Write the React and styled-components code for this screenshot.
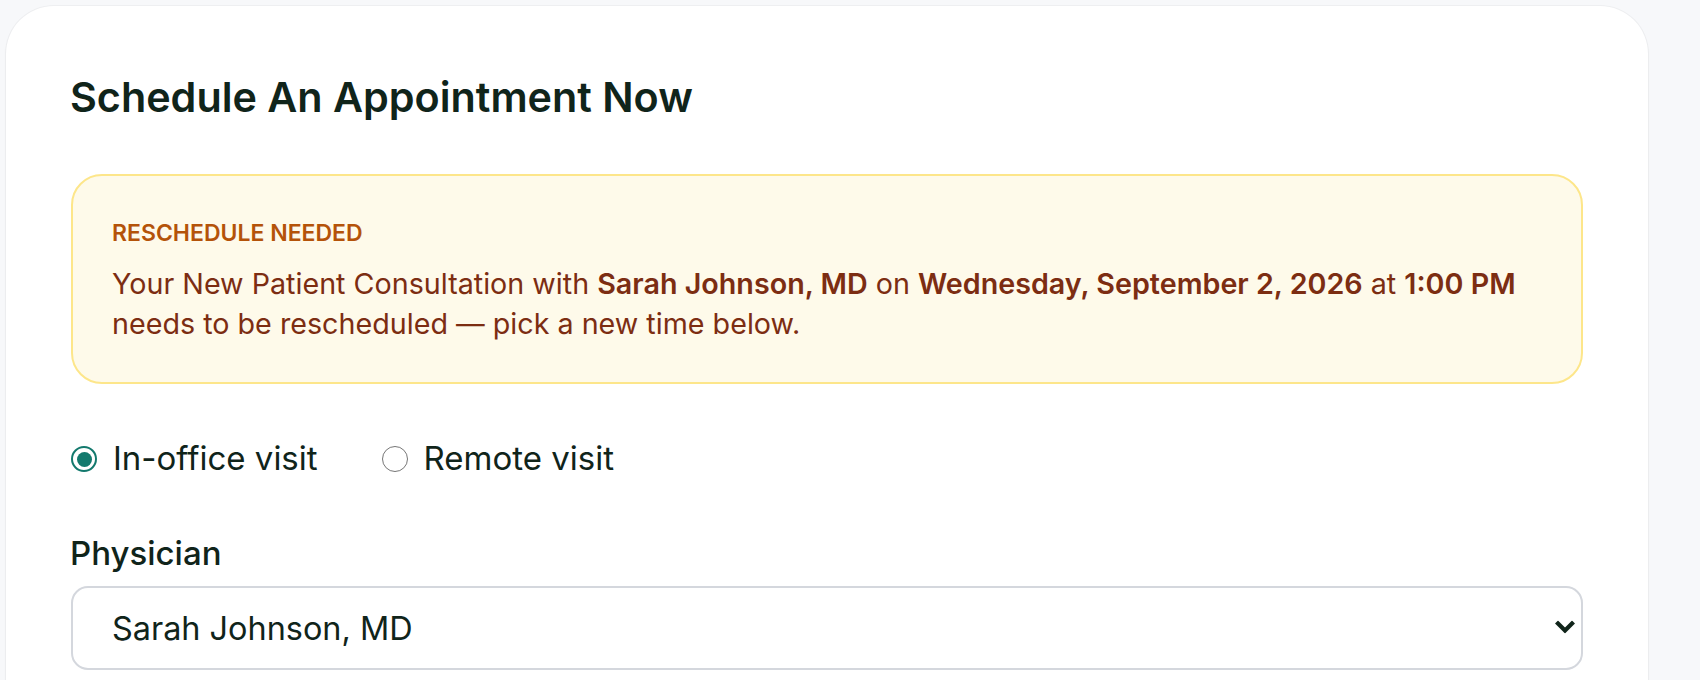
import React, { useState } from "react";
import styled, { createGlobalStyle } from "styled-components";

const GlobalStyle = createGlobalStyle`
  html, body { margin: 0; padding: 0; background: #f7f8fa; }
  body { font-family: "Inter", "Noto Sans", sans-serif; color: #12261c; }
  * { box-sizing: border-box; }
`;

const Page = styled.div`
  padding: 6px 52px 0 6px;
  min-height: 680px;
`;

const Card = styled.section`
  background: #ffffff;
  border-radius: 48px;
  box-shadow: 0 0 0 1px rgba(15, 23, 42, 0.035), 0 1px 3px rgba(15, 23, 42, 0.04);
  padding: 66px 65px 65px 65px;
  display: flex;
  flex-direction: column;
`;

const Title = styled.h1`
  margin: 0 0 0 -1px;
  font-size: 41.3px;
  line-height: 50px;
  font-weight: 600;
  color: #10241a;
`;

const Alert = styled.div`
  margin-top: 52px;
  background: #fefaea;
  border: 2px solid #fde68a;
  border-radius: 31px;
  padding: 43px 39px 38px 39px;
  display: flex;
  flex-direction: column;
  gap: 17px;
`;

const AlertLabel = styled.div`
  font-size: 23px;
  line-height: 28px;
  font-weight: 600;
  color: #b45309;
  text-transform: uppercase;
`;

const AlertText = styled.p`
  margin: 0;
  font-size: 28.7px;
  line-height: 40px;
  font-weight: 400;
  color: #7c2d12;
  strong { font-weight: 600; }
`;

const RadioRow = styled.div`
  margin-top: 54px;
  display: flex;
  align-items: center;
  gap: 64px;
`;

const RadioLabel = styled.label`
  display: flex;
  align-items: center;
  gap: 16px;
  font-size: 33px;
  line-height: 40px;
  color: #10241a;
  cursor: pointer;
`;

const HiddenInput = styled.input`
  position: absolute;
  opacity: 0;
  width: 0;
  height: 0;
  margin: 0;
`;

const RadioMark = styled.span`
  width: 26px;
  height: 26px;
  border-radius: 50%;
  flex: none;
  border: ${(p) => (p.$checked ? "2.5px solid #13796d" : "1.5px solid #767676")};
  background: #fff;
  display: flex;
  align-items: center;
  justify-content: center;
  margin-top: 2px;
  &::after {
    content: "";
    width: 15px;
    height: 15px;
    border-radius: 50%;
    background: ${(p) => (p.$checked ? "#13796d" : "transparent")};
  }
`;

const Field = styled.div`
  margin-top: 55px;
  display: flex;
  flex-direction: column;
  gap: 13px;
`;

const FieldLabel = styled.label`
  font-size: 33px;
  line-height: 40px;
  font-weight: 500;
  color: #10241a;
  margin-left: -1px;
`;

const SelectWrap = styled.div`
  position: relative;
`;

const Select = styled.select`
  appearance: none;
  -webkit-appearance: none;
  width: 100%;
  height: 84px;
  border: 2px solid #d4d7dd;
  border-radius: 17px;
  background: #ffffff;
  padding: 0 60px 0 39px;
  font-family: "Inter", "Noto Sans", sans-serif;
  font-size: 32.4px;
  color: #10241a;
  outline: none;
`;

const Chevron = styled.svg`
  position: absolute;
  right: 8px;
  top: 50%;
  transform: translateY(-58%);
  width: 20px;
  height: 13px;
  pointer-events: none;
`;

export default function App() {
  const [visit, setVisit] = useState("office");
  return (
    <>
      <GlobalStyle />
      <Page>
        <Card>
          <Title>Schedule An Appointment Now</Title>
          <Alert>
            <AlertLabel>Reschedule needed</AlertLabel>
            <AlertText>
              Your New Patient Consultation with <strong>Sarah Johnson, MD</strong> on{" "}
              <strong>Wednesday, September 2, 2026</strong> at <strong>1:00 PM</strong> needs to be
              rescheduled — pick a new time below.
            </AlertText>
          </Alert>
          <RadioRow>
            <RadioLabel>
              <HiddenInput
                type="radio"
                name="visit"
                checked={visit === "office"}
                onChange={() => setVisit("office")}
              />
              <RadioMark $checked={visit === "office"} />
              In-office visit
            </RadioLabel>
            <RadioLabel>
              <HiddenInput
                type="radio"
                name="visit"
                checked={visit === "remote"}
                onChange={() => setVisit("remote")}
              />
              <RadioMark $checked={visit === "remote"} />
              Remote visit
            </RadioLabel>
          </RadioRow>
          <Field>
            <FieldLabel htmlFor="physician">Physician</FieldLabel>
            <SelectWrap>
              <Select id="physician" defaultValue="sj">
                <option value="sj">Sarah Johnson, MD</option>
              </Select>
              <Chevron viewBox="0 0 20 13">
                <path
                  d="M3 3 L10 10 L17 3"
                  fill="none"
                  stroke="#10241a"
                  strokeWidth="4.2"
                  strokeLinecap="square"
                />
              </Chevron>
            </SelectWrap>
          </Field>
        </Card>
      </Page>
    </>
  );
}
